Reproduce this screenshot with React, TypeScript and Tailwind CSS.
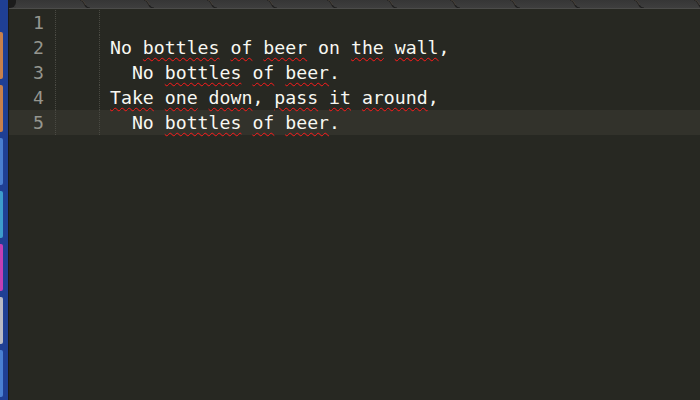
import React from "react";

const pills = ["#c8804c", "#c8804c", "#4a7fd0", "#3d9ccc", "#c23fb4", "#b9bac4", "#4a80d2"];

// words with a spell-check squiggle are marked with a leading "~"
const lines: { indent: string; words: string[] }[] = [
  { indent: "", words: [] },
  { indent: "", words: ["No", "~bottles", "~of", "~beer", "on", "~the", "~wall", ","] },
  { indent: "  ", words: ["No", "~bottles", "~of", "~beer", "."] },
  { indent: "", words: ["~Take", "~one", "~down", ",", "~pass", "~it", "~around", ","] },
  { indent: "  ", words: ["No", "~bottles", "~of", "~beer", "."] },
];

function Word({ w }: { w: string }) {
  if (w.startsWith("~")) {
    return (
      <span className="underline decoration-wavy decoration-[#ff1a1a] decoration-[1.4px] underline-offset-[3px]">
        {w.slice(1)}
      </span>
    );
  }
  return <span>{w}</span>;
}

function CodeLine({ indent, words }: { indent: string; words: string[] }) {
  const parts: React.ReactNode[] = [];
  words.forEach((w, i) => {
    const next = words[i + 1];
    parts.push(<Word key={i} w={w} />);
    if (next && next !== "," && next !== ".") parts.push(<span key={"s" + i}> </span>);
  });
  return (
    <span className="whitespace-pre">
      {indent}
      {parts}
    </span>
  );
}

function TabCurve() {
  return (
    <svg width="10" height="8" viewBox="0 0 10 8" className="shrink-0">
      <path d="M0 0 C3 0 4 3 5 5 C6 7 7 8 10 8" fill="none" stroke="#1f1f1f" strokeWidth="1.2" />
      <path d="M1 0 C3.5 0.5 4.5 3 5.5 5" fill="none" stroke="#6b5a4a" strokeWidth="0.5" />
    </svg>
  );
}

export default function App() {
  const tabWidths = [74, 64, 63, 60, 60, 60, 63, 60, 60, 64, 60];
  return (
    <div className="w-[700px] h-[400px] flex bg-[#272822] overflow-hidden" style={{ fontFamily: '"DejaVu Sans Mono", monospace' }}>
      {/* launcher strip */}
      <div className="w-[9px] shrink-0 bg-[#1f3f94] border-r border-[#1a1a1a] flex flex-col pt-[32px] gap-[6px]">
        {pills.map((c, i) => (
          <div key={i} className="w-[3px] h-[47px] rounded-r-[2px] shrink-0" style={{ backgroundColor: c }} />
        ))}
      </div>

      <div className="flex-1 flex flex-col min-w-0">
        {/* tab bar */}
        <div className="h-[9px] shrink-0 bg-[#3a3a3a] border-b border-[#4c4c4a] flex overflow-hidden">
          <div className="w-[7px] h-[8px] bg-[#1c1c1c] rounded-br-[6px] shrink-0" />
          {tabWidths.map((w, i) => (
            <div key={i} className="h-[8px] flex shrink-0 bg-gradient-to-b from-[#363636] to-[#3e3e3e]" style={{ width: w }}>
              <div className="flex-1" />
              <TabCurve />
            </div>
          ))}
        </div>

        {/* editor */}
        <div className="pt-[1px] text-[18.2px] leading-[25px]">
          {lines.map((l, i) => (
            <div key={i} className={`flex h-[25px] ${i === 4 ? "bg-[#32322b]" : ""}`}>
              <div className="w-[46px] shrink-0 text-right pr-[11px] text-[#95968f]">{i + 1}</div>
              <div className="w-[44px] shrink-0 border-l border-dotted border-[#4a4a43]" />
              <div className="w-[11px] shrink-0 border-l border-dotted border-[#4a4a43]" />
              <div className="text-[#f8f8f2]">
                <CodeLine indent={l.indent} words={l.words} />
              </div>
            </div>
          ))}
        </div>
      </div>
    </div>
  );
}
